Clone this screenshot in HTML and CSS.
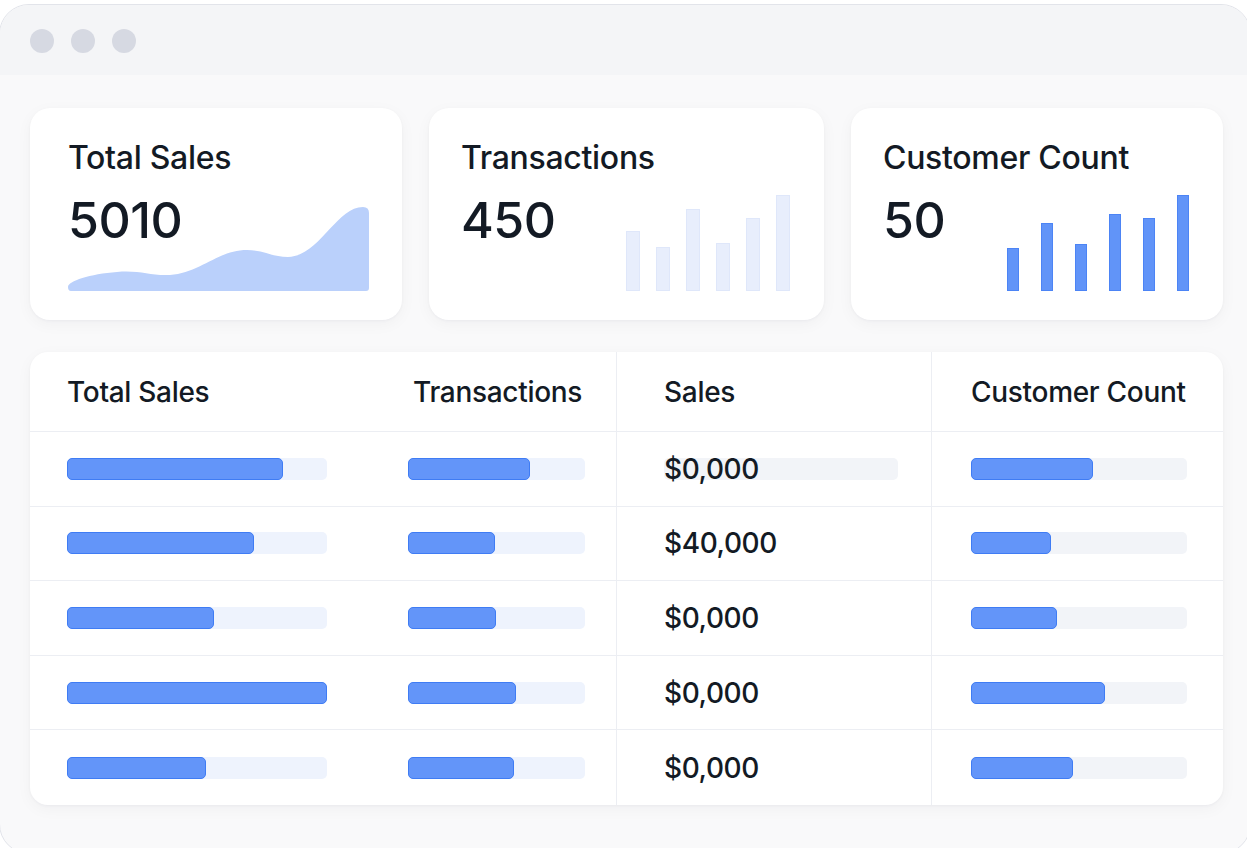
FILE: index.html
```html
<!DOCTYPE html>
<html lang="en">
<head>
<meta charset="utf-8">
<title>Sales Dashboard</title>
<link rel="stylesheet" href="styles.css">
</head>
<body>
<div class="window">
  <div class="titlebar">
    <span class="dot"></span><span class="dot"></span><span class="dot"></span>
  </div>
  <div class="content">
    <div class="cards">
      <div class="card card-wide-pad">
        <div class="card-title">Total Sales</div>
        <div class="card-body">
          <div class="card-value">5010</div>
          <svg class="area" width="301" height="84" viewBox="0 0 301 84">
            <path d="M0,80 C0,74 22,67 49,65 C72,63 82,69 102,68 C132,66 150,43 179,43 C196,43 204,50 220,50 C252,49 268,0 295,0 Q301,0 301,6 L301,81 Q301,84 298,84 L3,84 Q0,84 0,80 Z" fill="#bad0fb"/>
          </svg>
        </div>
      </div>
      <div class="card">
        <div class="card-title">Transactions</div>
        <div class="card-body">
          <div class="card-value">450</div>
          <div class="bars bars-light">
            <span class="bar" style="height:60px"></span>
            <span class="bar" style="height:44px"></span>
            <span class="bar" style="height:82px"></span>
            <span class="bar" style="height:48px"></span>
            <span class="bar" style="height:73px"></span>
            <span class="bar" style="height:96px"></span>
          </div>
        </div>
      </div>
      <div class="card">
        <div class="card-title">Customer Count</div>
        <div class="card-body">
          <div class="card-value">50</div>
          <div class="bars bars-blue">
            <span class="bar" style="height:43px"></span>
            <span class="bar" style="height:68px"></span>
            <span class="bar" style="height:47px"></span>
            <span class="bar" style="height:77px"></span>
            <span class="bar" style="height:73px"></span>
            <span class="bar" style="height:96px"></span>
          </div>
        </div>
      </div>
    </div>

    <div class="table">
      <div class="cell head c1">Total Sales</div>
      <div class="cell head c2">Transactions</div>
      <div class="cell head c3">Sales</div>
      <div class="cell head c4">Customer Count</div>

      <div class="cell c1"><div class="track t1"><div class="fill" style="width:216px"></div></div></div>
      <div class="cell c2"><div class="track t2"><div class="fill" style="width:122px"></div></div></div>
      <div class="cell c3"><div class="track t3 gray"><span class="money">$0,000</span></div></div>
      <div class="cell c4"><div class="track t4 gray"><div class="fill" style="width:122px"></div></div></div>

      <div class="cell c1"><div class="track t1"><div class="fill" style="width:187px"></div></div></div>
      <div class="cell c2"><div class="track t2"><div class="fill" style="width:87px"></div></div></div>
      <div class="cell c3"><span class="money">$40,000</span></div>
      <div class="cell c4"><div class="track t4 gray"><div class="fill" style="width:80px"></div></div></div>

      <div class="cell c1"><div class="track t1"><div class="fill" style="width:147px"></div></div></div>
      <div class="cell c2"><div class="track t2"><div class="fill" style="width:88px"></div></div></div>
      <div class="cell c3"><span class="money">$0,000</span></div>
      <div class="cell c4"><div class="track t4 gray"><div class="fill" style="width:86px"></div></div></div>

      <div class="cell c1"><div class="track t1"><div class="fill" style="width:260px"></div></div></div>
      <div class="cell c2"><div class="track t2"><div class="fill" style="width:108px"></div></div></div>
      <div class="cell c3"><span class="money">$0,000</span></div>
      <div class="cell c4"><div class="track t4 gray"><div class="fill" style="width:134px"></div></div></div>

      <div class="cell c1 last"><div class="track t1"><div class="fill" style="width:139px"></div></div></div>
      <div class="cell c2 last"><div class="track t2"><div class="fill" style="width:106px"></div></div></div>
      <div class="cell c3 last"><span class="money">$0,000</span></div>
      <div class="cell c4 last"><div class="track t4 gray"><div class="fill" style="width:102px"></div></div></div>
    </div>
  </div>
</div>
</body>
</html>
```

FILE: styles.css
```css
* { box-sizing: border-box; }
html, body {
  margin: 0;
  padding: 0;
  background: #ffffff;
  overflow: hidden;
}
body {
  font-family: "Inter", "Noto Sans", sans-serif;
  color: #131a24;
  width: 1247px;
  height: 848px;
}
.window {
  margin-top: 4px;
  margin-left: -1px;
  width: 1252px;
  height: 850px;
  border: 1px solid #e2e4ea;
  border-radius: 30px;
  background: #f9f9fa;
  overflow: hidden;
}
.titlebar {
  height: 70px;
  background: #f4f5f7;
  display: flex;
  align-items: center;
  gap: 17px;
  padding-left: 30px;
  padding-top: 2px;
}
.dot {
  width: 24px;
  height: 24px;
  border-radius: 50%;
  background: #d6d9e2;
}
.content {
  padding: 33px 0 0 30px;
}
.cards {
  display: grid;
  grid-template-columns: 372px 395px 372px;
  gap: 27px;
}
.card {
  height: 212px;
  background: #ffffff;
  border-radius: 20px;
  box-shadow: 0 1px 3px rgba(20, 30, 60, 0.04), 0 4px 16px rgba(20, 30, 60, 0.04);
  padding: 31px 34px 29px 32px;
  display: flex;
  flex-direction: column;
}
.card-wide-pad { padding-left: 38px; }
.card-title {
  font-size: 32px;
  line-height: 38px;
  font-weight: 500;
  letter-spacing: -0.3px;
}
.card-body {
  flex: 1;
  display: grid;
  margin-top: 18px;
}
.card-value {
  grid-area: 1 / 1;
  align-self: start;
  font-size: 50px;
  line-height: 1;
  font-weight: 500;
  letter-spacing: -0.5px;
  position: relative;
  z-index: 1;
}
.area {
  grid-area: 1 / 1;
  align-self: end;
  justify-self: start;
  display: block;
}
.bars {
  grid-area: 1 / 1;
  align-self: end;
  justify-self: end;
  display: flex;
  align-items: flex-end;
}
.bars-light { gap: 16px; }
.bars-light .bar {
  width: 14px;
  background: #e8eefc;
  border: 1px solid #dfe7fa;
}
.bars-blue { gap: 22px; }
.bars-blue .bar {
  width: 12px;
  background: #6194f8;
  border: 1px solid #4c84f5;
}
.table {
  margin-top: 32px;
  width: 1193px;
  height: 453px;
  background: #ffffff;
  border-radius: 18px;
  box-shadow: 0 1px 3px rgba(20, 30, 60, 0.04), 0 4px 16px rgba(20, 30, 60, 0.04);
  display: grid;
  grid-template-columns: 340px 246px 315px 292px;
  grid-template-rows: 80px repeat(5, 1fr);
  overflow: hidden;
}
.cell {
  display: flex;
  align-items: center;
  border-bottom: 1px solid #eceef3;
}
.cell.last { border-bottom: none; }
.c1 { padding-left: 37px; }
.c2 { padding-left: 38px; }
.c3 { padding-left: 47px; border-left: 1px solid #eceef3; }
.c4 { padding-left: 39px; border-left: 1px solid #eceef3; }
.head {
  font-size: 28px;
  font-weight: 500;
  letter-spacing: -0.3px;
}
.c2.head { padding-left: 43px; }
.track {
  height: 22px;
  border-radius: 5px;
  background: #eef3fd;
  display: flex;
  align-items: center;
}
.track.gray { background: #f2f4f8; }
.t1 { width: 260px; }
.t2 { width: 177px; }
.t3 { width: 234px; }
.t4 { width: 216px; }
.fill {
  height: 22px;
  border-radius: 5px;
  background: #6395f9;
  border: 1px solid #3f7cf4;
}
.money {
  font-size: 28px;
  font-weight: 500;
  letter-spacing: -0.4px;
}
```
